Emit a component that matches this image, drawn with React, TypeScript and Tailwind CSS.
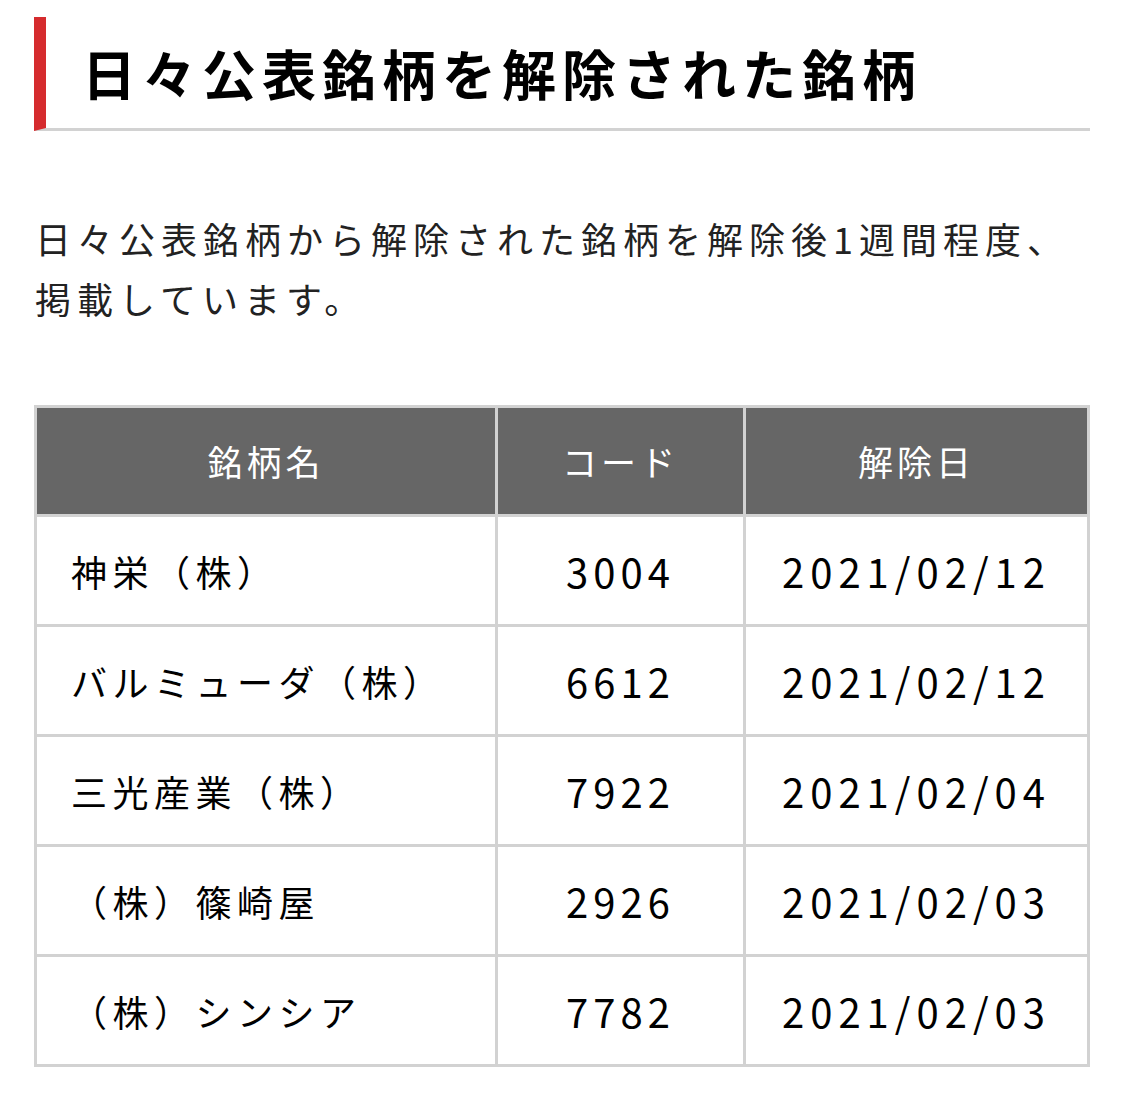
const rows = [
  { name: "神栄（株）", code: "3004", date: "2021/02/12" },
  { name: "バルミューダ（株）", code: "6612", date: "2021/02/12" },
  { name: "三光産業（株）", code: "7922", date: "2021/02/04" },
  { name: "（株）篠崎屋", code: "2926", date: "2021/02/03" },
  { name: "（株）シンシア", code: "7782", date: "2021/02/03" },
];

export default function App() {
  return (
    <div
      className="min-h-[1106px] w-[1125px] bg-white pt-[17px] text-black"
      style={{ fontFamily: '"Noto Sans CJK JP", "Noto Sans", sans-serif' }}
    >
      <div className="mx-[34px] w-[1056px]">
        <h1 className="flex h-[114px] items-center border-b-[3px] border-[#d2d2d2] border-l-[12px] border-l-[#d52b2e] pl-[36px] text-[54px] font-bold leading-none tracking-[6px]">
          日々公表銘柄を解除された銘柄
        </h1>

        <p className="mt-[77px] pl-[1px] text-[36px] leading-[60px] tracking-[6px] text-[#222]">
          日々公表銘柄から解除された銘柄を解除後1週間程度、
          <br />
          掲載しています。
        </p>

        <table className="mt-[77px] w-full border-collapse border-[3px] border-[#d2d2d2] text-[36px] tracking-[5px]">
          <colgroup>
            <col className="w-[461px]" />
            <col className="w-[248px]" />
            <col />
          </colgroup>
          <thead>
            <tr className="h-[109px] bg-[#666666] text-[35px] tracking-[4px] text-white">
              <th className="border-[3px] border-[#d2d2d2] font-normal">銘柄名</th>
              <th className="border-[3px] border-[#d2d2d2] font-normal">コード</th>
              <th className="border-[3px] border-[#d2d2d2] font-normal">解除日</th>
            </tr>
          </thead>
          <tbody>
            {rows.map((r) => (
              <tr key={r.code} className="h-[110px]">
                <td className="border-[3px] border-[#d2d2d2] pl-[34px] tracking-[5.5px]">{r.name}</td>
                <td className="border-[3px] border-[#d2d2d2] text-center text-[40px] tracking-[5px]">
                  {r.code}
                </td>
                <td className="border-[3px] border-[#d2d2d2] text-center text-[40px] tracking-[6px]">
                  {r.date}
                </td>
              </tr>
            ))}
          </tbody>
        </table>
      </div>
    </div>
  );
}
